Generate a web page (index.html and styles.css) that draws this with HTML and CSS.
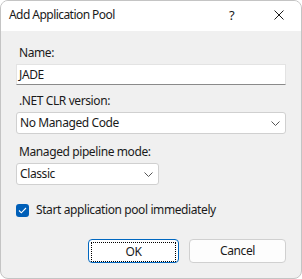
FILE: index.html
```html
<!DOCTYPE html>
<html>
<head>
    <meta charset="utf-8" />
    <title>Add Application Pool</title>
    <link rel="stylesheet" href="styles.css">
</head>
<body>
    <div class="window">
        <div class="titlebar">
            <span class="title">Add Application Pool</span>
            <span class="help">?</span>
            <span class="close">
                <svg width="10" height="10" viewBox="0 0 10 10"><path d="M0.5 0.5L9.5 9.5M9.5 0.5L0.5 9.5" stroke="#1a1a1a" stroke-width="1" fill="none"/></svg>
            </span>
        </div>
        <div class="content">
            <label class="lbl">Name:</label>
            <div class="textbox">JADE</div>

            <label class="lbl">.NET CLR version:</label>
            <div class="select wide">
                <span>No Managed Code</span>
                <svg class="chev" width="9" height="5" viewBox="0 0 9 5"><path d="M0.5 0.5L4.5 4.5L8.5 0.5" stroke="#555" stroke-width="1" fill="none"/></svg>
            </div>

            <label class="lbl">Managed pipeline mode:</label>
            <div class="select narrow">
                <span>Classic</span>
                <svg class="chev" width="9" height="5" viewBox="0 0 9 5"><path d="M0.5 0.5L4.5 4.5L8.5 0.5" stroke="#555" stroke-width="1" fill="none"/></svg>
            </div>

            <div class="check">
                <span class="box">
                    <svg width="9" height="7" viewBox="0 0 9 7"><path d="M1 3.5L3.3 5.8L8 1" stroke="#fff" stroke-width="1.1" fill="none"/></svg>
                </span>
                <span>Start application pool immediately</span>
            </div>

            <div class="buttons">
                <button class="btn ok"><span class="focus">OK</span></button>
                <button class="btn cancel">Cancel</button>
            </div>
        </div>
    </div>
</body>
</html>
```

FILE: styles.css
```css
body {
    margin: 0;
    padding: 0;
    font: 12px/16px "Noto Sans", "Open Sans", sans-serif;
    letter-spacing: -0.4px;
    color: #1a1a1a;
    background: #ffffff;
}

.window {
    width: 302px;
    height: 279px;
    box-sizing: border-box;
    border: 1px solid #c4c4c4;
    border-radius: 8px;
    overflow: hidden;
    background: #f0f0f0;
    display: flex;
    flex-direction: column;
}

.titlebar {
    height: 30px;
    background: #ffffff;
    display: flex;
    align-items: center;
    padding-left: 8px;
}

.title {
    flex: 1;
    padding-bottom: 2px;
    letter-spacing: -0.55px;
}

.help {
    width: 7px;
    font-size: 13px;
    margin-right: 38px;
    padding-bottom: 2px;
}

.close {
    width: 10px;
    height: 10px;
    margin-right: 17px;
    margin-bottom: 2px;
    display: flex;
}

.content {
    display: flex;
    flex-direction: column;
    padding: 14px 15px 0 15px;
}

.lbl {
    padding-left: 3px;
    margin-bottom: 3px;
}

.textbox {
    height: 19px;
    background: #ffffff;
    border: 1px solid #e3e3e3;
    border-bottom-color: #8a8a8a;
    padding-left: 2px;
    line-height: 20px;
    margin-bottom: 8px;
}

.select {
    height: 20px;
    background: #ffffff;
    border: 1px solid #d0d0d0;
    border-radius: 3px;
    display: flex;
    align-items: center;
    justify-content: space-between;
    padding: 0 5px 0 3px;
    margin-bottom: 10px;
}

.select.narrow {
    width: 133px;
}

.chev {
    margin-top: 1px;
}

.check {
    display: flex;
    align-items: center;
    gap: 7px;
    margin-top: 7px;
}

.box {
    width: 13px;
    height: 13px;
    border-radius: 3px;
    background: #005fb8;
    display: flex;
    align-items: center;
    justify-content: center;
}

.buttons {
    display: flex;
    justify-content: flex-end;
    gap: 10px;
    margin-top: 21px;
}

.btn {
    font: inherit;
    letter-spacing: inherit;
    color: #1a1a1a;
    height: 24px;
    background: #fdfdfd;
    border: 1px solid #d0d0d0;
    border-radius: 4px;
    padding: 0;
}

.ok {
    width: 91px;
    border-color: #0067c0;
    background: #ffffff;
    padding: 2px;
}

.focus {
    display: block;
    height: 18px;
    line-height: 18px;
    border: 1px dotted #000000;
}

.cancel {
    width: 97px;
}
```
